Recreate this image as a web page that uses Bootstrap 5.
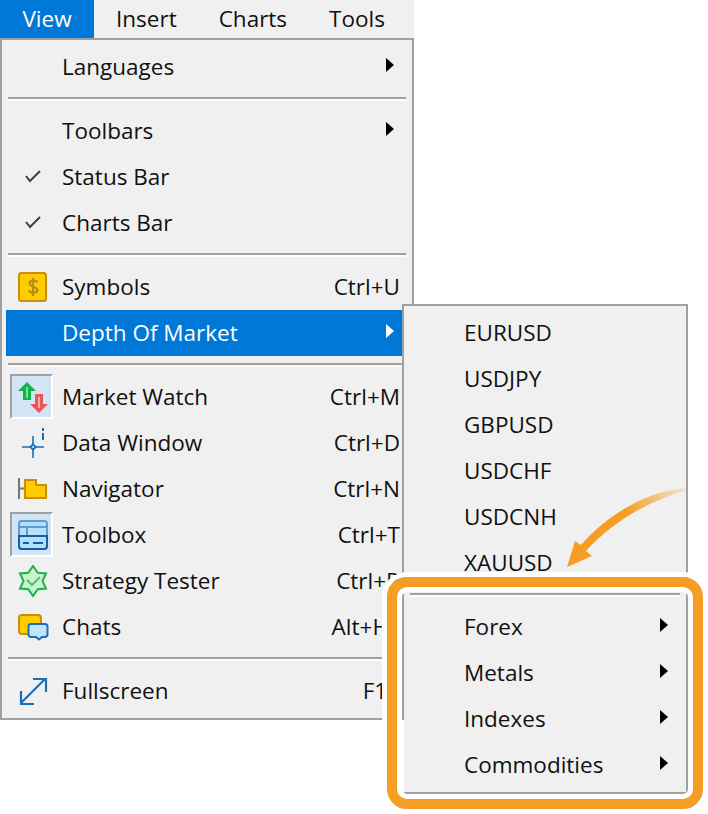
<!DOCTYPE html>
<html lang="en"><head><meta charset="utf-8"><title>View menu</title>
<link href="https://cdn.jsdelivr.net/npm/bootstrap@5.3.0/dist/css/bootstrap.min.css" rel="stylesheet">
<style>
html,body{background:#fff;margin:0;overflow:hidden}
.stage{position:relative;width:708px;height:814px;font-family:"Open Sans","Noto Sans",sans-serif;font-size:22.5px;color:#111;overflow:hidden}
.bar{width:414px;height:38px;background:#f0f0f0}
.bar-item{height:38px;line-height:37px;padding:0 21px;}
.bar-item.on{background:#0078d7;color:#fff;padding:0;width:94px;margin-right:1px;text-align:center}
.panel{background:#f0f0f0;border:2px solid #a0a0a0;padding:4px}
.main-panel{width:414px}
.sub-panel{position:absolute;left:402px;top:304px;width:286px;height:490px}
.sub-patch{position:absolute;left:-2px;top:414px;width:2px;height:76px;background:#fff}
.row-item{height:46px;line-height:45px;white-space:nowrap;position:relative}
.row-item.on{background:#0078d7;color:#fff}
.main-panel .row-item{padding-left:56px}
.sub-panel .row-item{padding-left:56px}
.shortcut{position:absolute;right:8px;top:0}
.shortcut.far{right:19px}
.chev{position:absolute;width:8px;height:14px;top:14px}
.main-panel .chev{left:380px}
.sub-panel .chev{left:252px}
.rule{height:4px;margin:7px 2px;border-top:2px solid #a0a0a0;background:#fff}
.glyph{position:absolute;left:12px;top:7px;width:32px;height:32px}
.glyph-box{position:absolute;left:4px;top:0;width:43px;height:45px;background:#d3e4f4;border:2px solid #a0a0a0;border-right-color:#fff;border-bottom-color:#fff}
.call{position:absolute;left:387px;top:577px;width:316px;height:232px;border:10px solid #f59d24;border-radius:20px;box-shadow:0 0 0 5px #fff,inset 0 0 0 5px #fff}
.swoosh{position:absolute;left:560px;top:480px;width:135px;height:95px}
</style></head><body>
<div class="stage">
<div class="bar d-flex"><div class="bar-item on">View</div><div class="bar-item">Insert</div><div class="bar-item">Charts</div><div class="bar-item">Tools</div></div>
<div class="panel main-panel">
<div class="row-item">Languages<svg class="chev" viewBox="0 0 8 14"><path d="M0 0 8 7 0 14z" fill="#000"/></svg></div>
<div class="rule"></div>
<div class="row-item">Toolbars<svg class="chev" viewBox="0 0 8 14"><path d="M0 0 8 7 0 14z" fill="#000"/></svg></div>
<div class="row-item"><svg class="glyph" viewBox="0 0 32 32"><path d="M8 15l4 5 10-10" fill="none" stroke="#404040" stroke-width="2"/></svg>Status Bar</div>
<div class="row-item"><svg class="glyph" viewBox="0 0 32 32"><path d="M8 15l4 5 10-10" fill="none" stroke="#404040" stroke-width="2"/></svg>Charts Bar</div>
<div class="rule"></div>
<div class="row-item"><svg class="glyph" viewBox="0 0 32 32"><rect x="1" y="2" width="27" height="28" rx="2.500" fill="#fc0" stroke="#c98d0f" stroke-width="2"/><path d="M19.500 11.500c-1-2.500-8-3-8 .8s8.500 3 8 7c-.5 3-7.500 3-8.500 0M15 7v18" fill="none" stroke="#b98a14" stroke-width="2.200"/></svg>Symbols<span class="shortcut">Ctrl+U</span></div>
<div class="row-item on">Depth Of Market<svg class="chev" viewBox="0 0 8 14"><path d="M0 0 8 7 0 14z" fill="#fff"/></svg></div>
<div class="rule"></div>
<div class="row-item"><span class="glyph-box"></span><svg class="glyph" viewBox="0 0 32 32"><path d="M9 1 0 10h5v9h8v-9h5z" fill="#12b24d"/><path d="M9 6v11" stroke="#7fdc9c" stroke-width="2"/><path d="M21 32l9-9h-5v-10h-8v10h-5z" fill="#ee5656"/><path d="M21 16v11" stroke="#f9b4b4" stroke-width="2"/></svg>Market Watch<span class="shortcut">Ctrl+M</span></div>
<div class="row-item"><svg class="glyph" viewBox="0 0 32 32"><path d="M15 9v22M4 20h22" stroke="#1b6fb5" stroke-width="1.600"/><path d="M15 16l4 4-4 4-4-4z" fill="#1b6fb5"/><circle cx="15" cy="20" r="1.300" fill="#a8d0f0"/><path d="M25 1v3M25 6v7" stroke="#1b6fb5" stroke-width="2"/></svg>Data Window<span class="shortcut">Ctrl+D</span></div>
<div class="row-item"><svg class="glyph" viewBox="0 0 32 32"><path d="M1 5v21M1 15.500h5" stroke="#777" stroke-width="2" fill="none"/><path d="M7 7H18V12H28V25H7Z" fill="#fc0" stroke="#c98d0f" stroke-width="2"/></svg>Navigator<span class="shortcut">Ctrl+N</span></div>
<div class="row-item"><span class="glyph-box"></span><svg class="glyph" viewBox="0 0 32 32"><rect x="1" y="2" width="28" height="28" rx="2.500" fill="#b8defa" stroke="#5a9fd4" stroke-width="2"/><path d="M1 8h28M9 8v9" stroke="#5a9fd4" stroke-width="2" fill="none"/><path d="M1 17h28v10a3 3 0 0 1-3 3H4a3 3 0 0 1-3-3zM5 24h6M15 24h10" stroke="#0f62a8" stroke-width="2" fill="none"/></svg>Toolbox<span class="shortcut">Ctrl+T</span></div>
<div class="row-item"><svg class="glyph" viewBox="0 0 32 32"><path d="M15 1 19.750 7.800 28 8.500 24.500 16 28 23.500 19.750 24.200 15 31 10.250 24.200 2 23.500 5.500 16 2 8.500 10.250 7.800Z" fill="#c9f2d0" stroke="#1cb34a" stroke-width="2"/><path d="M9 15l5 5 8-8" fill="none" stroke="#4cc66e" stroke-width="2"/></svg>Strategy Tester<span class="shortcut">Ctrl+R</span></div>
<div class="row-item"><svg class="glyph" viewBox="0 0 32 32"><rect x="1" y="4" width="22" height="19" rx="3" fill="#fc0" stroke="#c98d0f" stroke-width="2"/><path d="M13 13h14a2.500 2.500 0 0 1 2.500 2.500v8a2.500 2.500 0 0 1-2.500 2.500h-3l-3 2.500-3-2.500h-5a2.500 2.500 0 0 1-2.500-2.500v-8A2.500 2.500 0 0 1 13 13z" fill="#c4e4fb" stroke="#1b6fb5" stroke-width="2"/></svg>Chats<span class="shortcut far">Alt+H</span></div>
<div class="rule"></div>
<div class="row-item"><svg class="glyph" viewBox="0 0 32 32"><path d="M3 28 27 4M15 4h13v13M3 16v13h13" fill="none" stroke="#1b6fb5" stroke-width="2.200"/></svg>Fullscreen<span class="shortcut">F11</span></div>
</div>
<div class="panel sub-panel"><div class="sub-patch"></div>
<div class="row-item">EURUSD</div><div class="row-item">USDJPY</div><div class="row-item">GBPUSD</div><div class="row-item">USDCHF</div><div class="row-item">USDCNH</div><div class="row-item">XAUUSD</div>
<div class="rule"></div>
<div class="row-item">Forex<svg class="chev" viewBox="0 0 8 14"><path d="M0 0 8 7 0 14z" fill="#000"/></svg></div>
<div class="row-item">Metals<svg class="chev" viewBox="0 0 8 14"><path d="M0 0 8 7 0 14z" fill="#000"/></svg></div>
<div class="row-item">Indexes<svg class="chev" viewBox="0 0 8 14"><path d="M0 0 8 7 0 14z" fill="#000"/></svg></div>
<div class="row-item">Commodities<svg class="chev" viewBox="0 0 8 14"><path d="M0 0 8 7 0 14z" fill="#000"/></svg></div>
</div>
<div class="call"></div>
<svg class="swoosh" viewBox="560 480 135 95"><defs><linearGradient id="sw" gradientUnits="userSpaceOnUse" x1="688" y1="488" x2="625" y2="510"><stop offset="0" stop-color="#f59d24" stop-opacity=".1"/><stop offset="1" stop-color="#f59d24"/></linearGradient></defs><path d="M688 488C650 490 610 512 581 545L575 541 567 567 592 556 586 551C612 522 650 500 688 490Z" fill="url(#sw)"/></svg>
</div>
</body></html>
